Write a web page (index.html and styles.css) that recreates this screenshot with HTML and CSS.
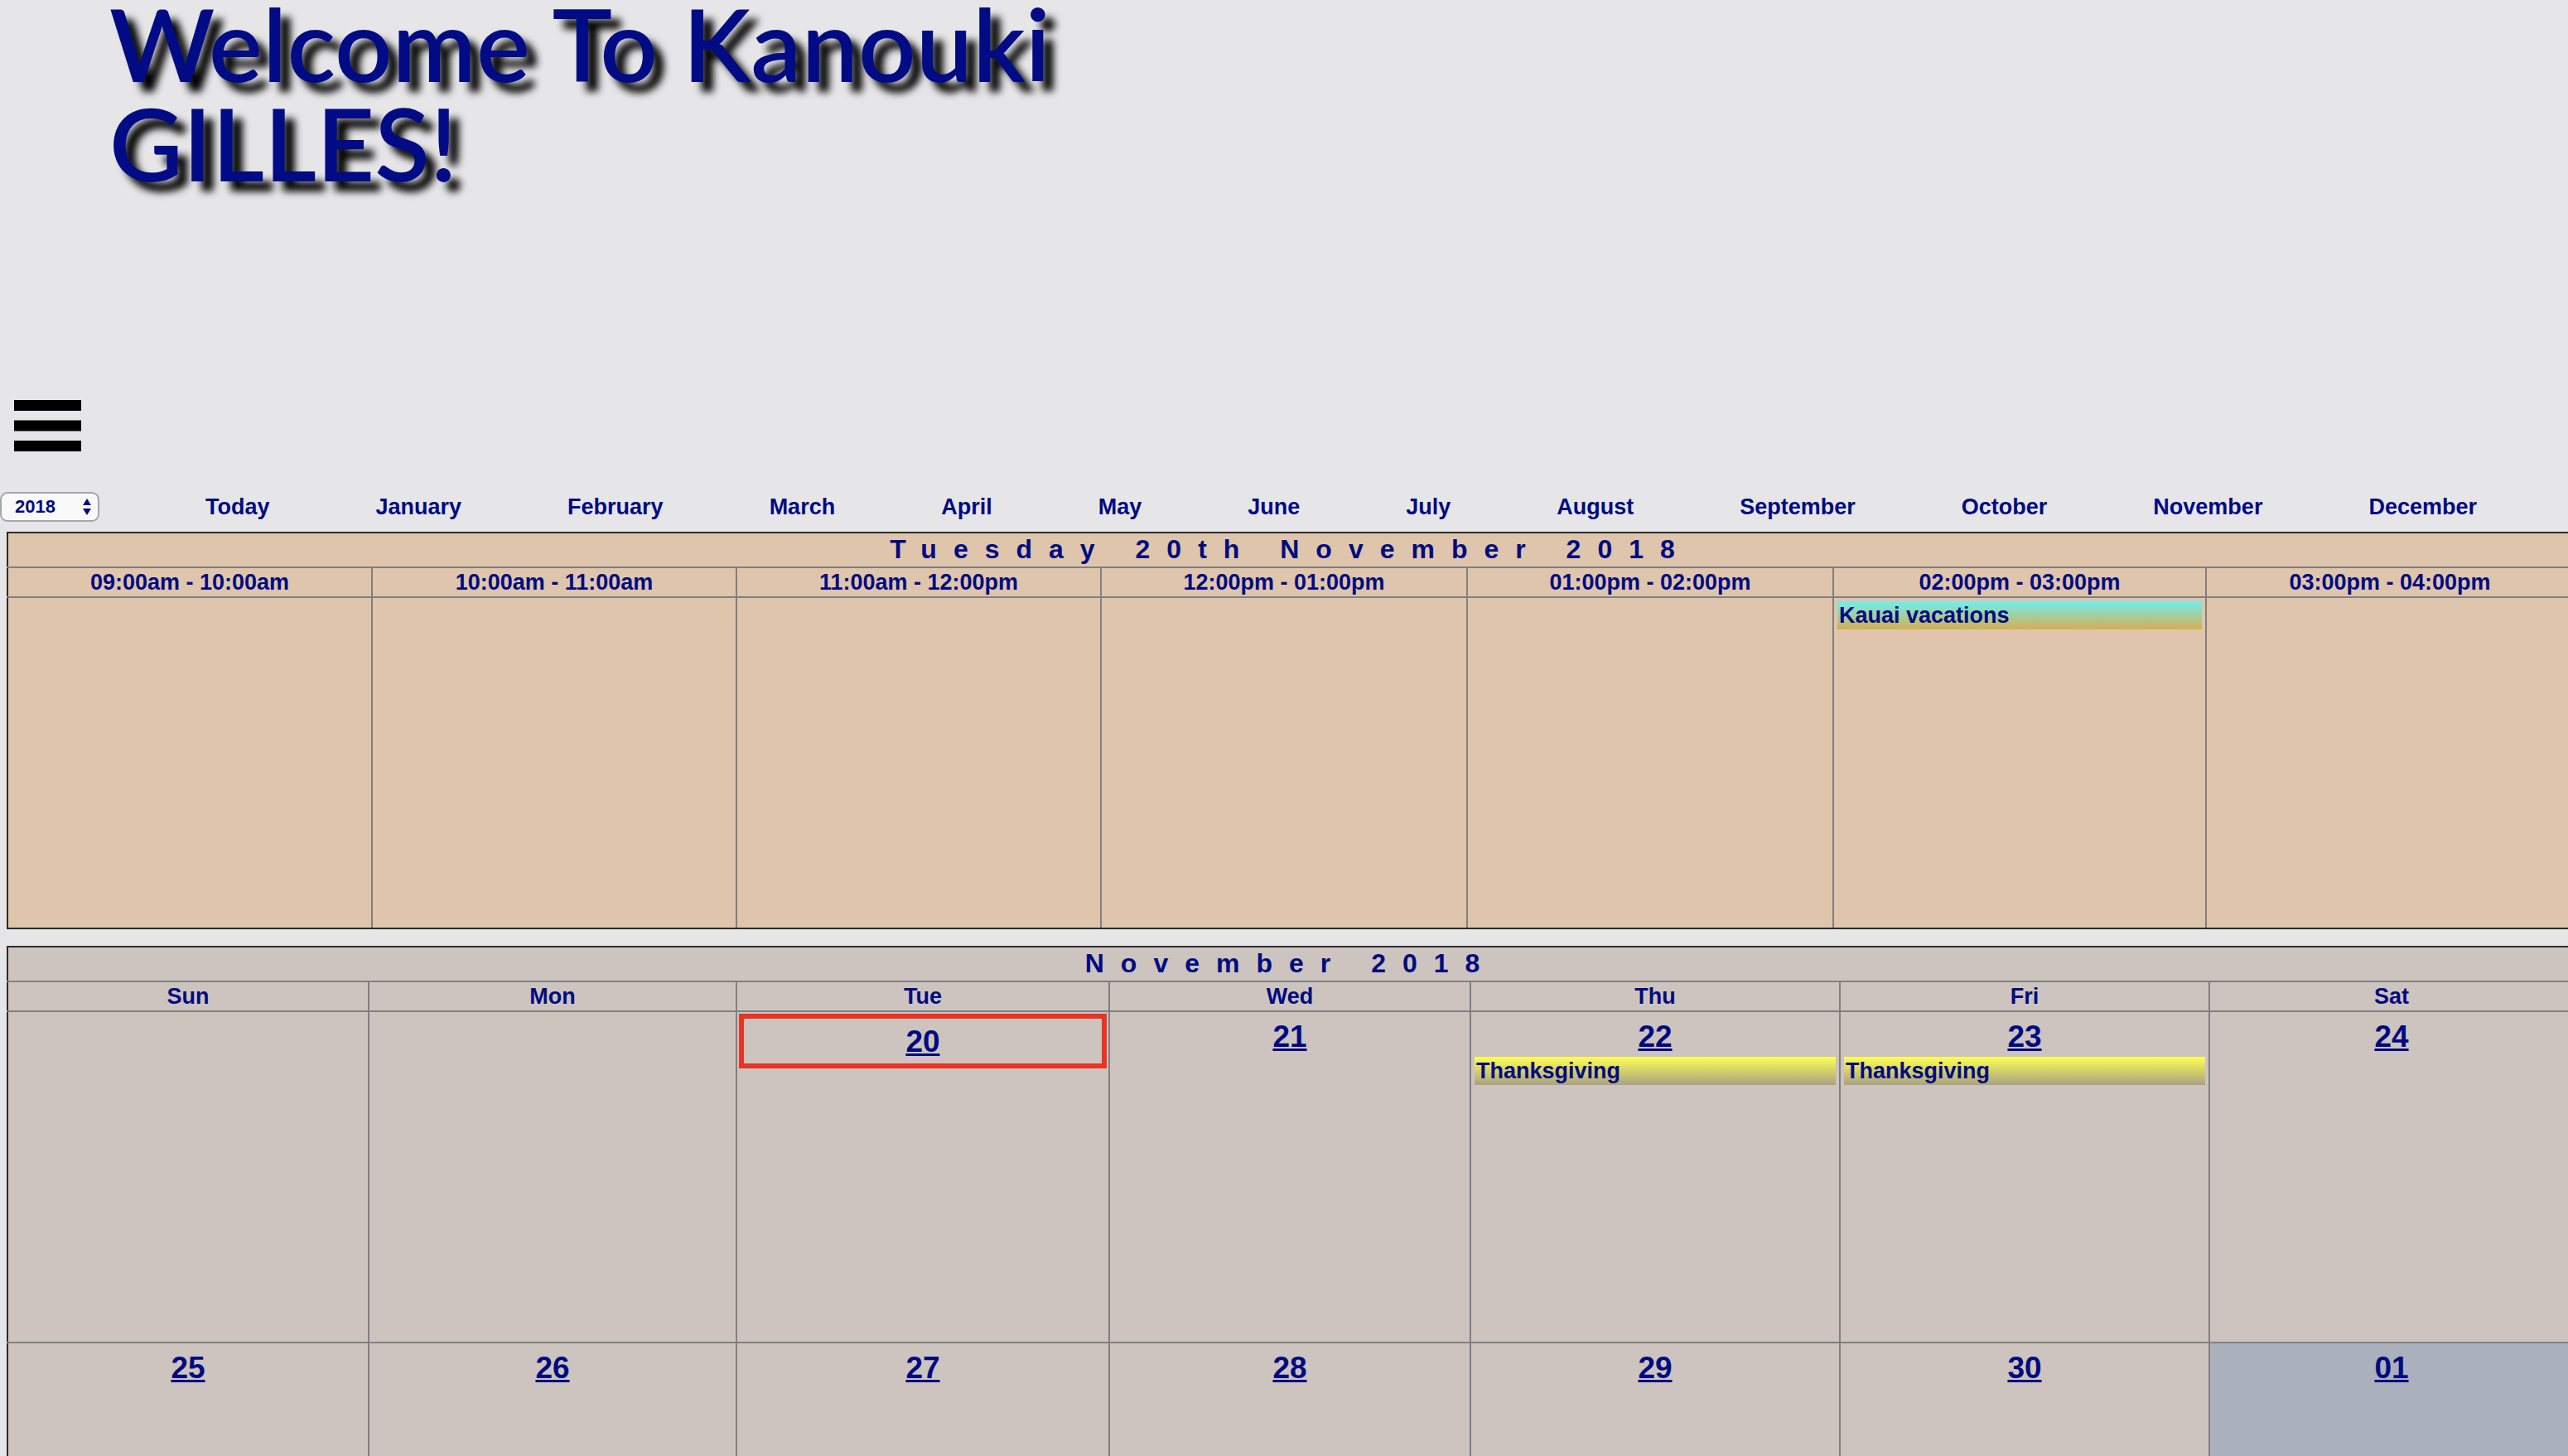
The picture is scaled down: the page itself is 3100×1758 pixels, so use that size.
FILE: index.html
```html
<!DOCTYPE html>
<html lang="en">
<head>
<meta charset="utf-8">
<title>Kanouki</title>
<link rel="stylesheet" href="styles.css">
</head>
<body>
<header class="banner">
  <h1 class="welcome">Welcome To Kanouki<br>GILLES!</h1>
</header>
<button class="menu" type="button" aria-label="Menu">
  <svg width="81" height="62" viewBox="0 0 81 62" aria-hidden="true"><path d="M0 0h81v13H0zM0 24.5h81v13H0zM0 49h81v13H0z"/></svg>
</button>
<nav class="months">
  <div class="year">
    <select class="year-select" aria-label="Year"><option>2017</option><option selected>2018</option><option>2019</option></select>
    <svg class="year-arrows" width="10" height="20" viewBox="0 0 10 20" aria-hidden="true"><path d="M5 0l5 8H0zM5 20l5-8H0z"/></svg>
  </div>
  <a href="#today">Today</a>
  <a href="#january">January</a>
  <a href="#february">February</a>
  <a href="#march">March</a>
  <a href="#april">April</a>
  <a href="#may">May</a>
  <a href="#june">June</a>
  <a href="#july">July</a>
  <a href="#august">August</a>
  <a href="#september">September</a>
  <a href="#october">October</a>
  <a href="#november">November</a>
  <a href="#december">December</a>
</nav>
<main class="calendars">
  <table class="calendar day-view">
    <colgroup><col class="w440"><col class="w440"><col class="w440"><col class="w442"><col class="w442"><col class="w450"><col class="w444"></colgroup>
    <thead>
      <tr><th class="heading" colspan="7">Tuesday 20th November 2018</th></tr>
      <tr><th>09:00am - 10:00am</th><th>10:00am - 11:00am</th><th>11:00am - 12:00pm</th><th>12:00pm - 01:00pm</th><th>01:00pm - 02:00pm</th><th>02:00pm - 03:00pm</th><th>03:00pm - 04:00pm</th></tr>
    </thead>
    <tbody>
      <tr><td></td><td></td><td></td><td></td><td></td><td><div class="event vacation">Kauai vacations</div></td><td></td></tr>
    </tbody>
  </table>
  <table class="calendar month-view">
    <colgroup><col class="w436"><col class="w444"><col class="w450"><col class="w436"><col class="w446"><col class="w446"><col class="w440"></colgroup>
    <thead>
      <tr><th class="heading" colspan="7">November 2018</th></tr>
      <tr><th>Sun</th><th>Mon</th><th>Tue</th><th>Wed</th><th>Thu</th><th>Fri</th><th>Sat</th></tr>
    </thead>
    <tbody>
      <tr>
        <td></td>
        <td></td>
        <td><div class="date today"><a href="#d20">20</a></div></td>
        <td><div class="date"><a href="#d21">21</a></div></td>
        <td><div class="date"><a href="#d22">22</a></div><div class="event holiday">Thanksgiving</div></td>
        <td><div class="date"><a href="#d23">23</a></div><div class="event holiday">Thanksgiving</div></td>
        <td><div class="date"><a href="#d24">24</a></div></td>
      </tr>
      <tr>
        <td><div class="date"><a href="#d25">25</a></div></td>
        <td><div class="date"><a href="#d26">26</a></div></td>
        <td><div class="date"><a href="#d27">27</a></div></td>
        <td><div class="date"><a href="#d28">28</a></div></td>
        <td><div class="date"><a href="#d29">29</a></div></td>
        <td><div class="date"><a href="#d30">30</a></div></td>
        <td class="next-month"><div class="date"><a href="#d01">01</a></div></td>
      </tr>
    </tbody>
  </table>
</main>
</body>
</html>
```
FILE: styles.css
```css
* { box-sizing: border-box; }

body {
  margin: 0;
  height: 100vh;
  overflow: hidden;
  background: #e6e6e8;
  color: #000b80;
  font: bold 27px/34px "Liberation Sans", Arial, sans-serif;
}

a { color: inherit; }

.banner {
  display: flow-root;
  padding-left: 132px;
  height: 483px;
}

.welcome {
  margin: -8px 0 0;
  color: #000b85;
  font: 600 122px/120px "Comic Sans MS", Lato, sans-serif;
  text-shadow: 12px 12px 10px #000;
}

.menu {
  display: block;
  margin: 0 0 0 17px;
  padding: 0;
  border: 0;
  background: none;
}

.menu svg { display: block; }

.months {
  display: flex;
  justify-content: space-between;
  align-items: center;
  margin-top: 49px;
  padding-right: 110px;
}

.months > a { text-decoration: none; }

.year { position: relative; }

.year-select {
  display: block;
  width: 120px;
  height: 36px;
  padding: 0 16px;
  appearance: none;
  border: 2px solid #a6a6a6;
  border-radius: 9px;
  background: #f9f9f9;
  color: inherit;
  font: bold 22px/30px "Liberation Sans", Arial, sans-serif;
}

.year-arrows {
  position: absolute;
  right: 10px;
  top: 8px;
  fill: #000b80;
  pointer-events: none;
}

.calendars {
  margin-top: 12px;
  padding-left: 8px;
  overflow: hidden;
}

/* The grid runs a little past the right edge of the window. */
.calendar {
  width: calc(100% + 8px);
  margin-bottom: 20px;
  table-layout: fixed;
  border-collapse: collapse;
  border: 2px solid #2b2b2b;
}

.day-view { background: #dfc5ac; }
.month-view { background: #cdc4bf; }

.calendar th {
  height: 36px;
  padding: 0;
  border: 2px solid #808080;
  line-height: 34px;
}

.calendar .heading {
  height: 42px;
  padding: 1px 0 3px;
  font-size: 32px;
  line-height: 36px;
  letter-spacing: 20px;
}

.calendar td {
  height: 400px;
  padding: 2px;
  border: 2px solid #808080;
  vertical-align: top;
}

/* The outer frame stays dark around the grey cell lines. */
.calendar tr > :first-child { border-left-color: #2b2b2b; }
.calendar tr > :last-child { border-right-color: #2b2b2b; }
.calendar thead tr:first-child > th { border-top-color: #2b2b2b; }
.calendar tbody tr:last-child > td { border-bottom-color: #2b2b2b; }

.calendar .next-month { background: #aab0bc; }

.date {
  padding: 7px 0 1px;
  font-size: 37px;
  line-height: 42px;
  text-align: center;
}

.today {
  padding-bottom: 5px;
  border: 6px solid #ea3323;
}

.event {
  margin: 2px 2px 0;
  padding-left: 2px;
}

.vacation { background: linear-gradient(#70efef, #d6ae51); }
.holiday { background: linear-gradient(#ffff54, #aaa283); }

.w436 { width: 436px; }
.w440 { width: 440px; }
.w442 { width: 442px; }
.w444 { width: 444px; }
.w446 { width: 446px; }
.w450 { width: 450px; }
```
